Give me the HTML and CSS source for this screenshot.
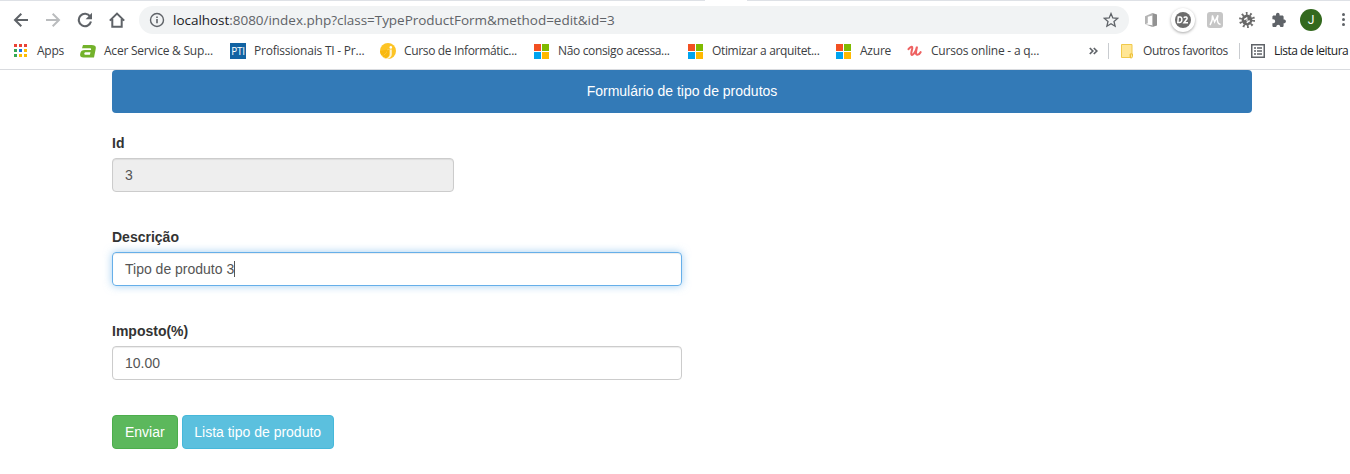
FILE: index.html
```html
<!DOCTYPE html>
<html lang="pt-BR">
<head>
<meta charset="utf-8">
<title>Formulário de tipo de produtos</title>
<link rel="stylesheet" href="styles.css">
</head>
<body>
<header class="browser">
  <div class="tab-edge"><span></span><span></span></div>
  <div class="toolbar">
    <nav class="nav-icons">
      <svg width="16" height="16" viewBox="0 0 16 16" fill="none" stroke="#5f6368" stroke-width="2"><path d="M15 8H2.2M8.3 1.7L2 8l6.3 6.3"/></svg>
      <svg width="16" height="16" viewBox="0 0 16 16" fill="none" stroke="#babcbe" stroke-width="2"><path d="M1 8h12.8M7.7 1.7L14 8l-6.3 6.3"/></svg>
      <svg width="16" height="16" viewBox="0 0 16 16"><path d="M13.2 4.6A6.2 6.2 0 1 0 14 9.6" fill="none" stroke="#5f6368" stroke-width="2.1"/><path d="M15 .8v6.4H8.6z" fill="#5f6368"/></svg>
      <svg width="16" height="16" viewBox="0 0 16 16" fill="none" stroke="#5f6368" stroke-width="2"><path d="M.8 8.6L8 1.6l7.2 7M3.3 7v7.8h9.4V7"/></svg>
    </nav>
    <div class="address">
      <svg class="info" width="16" height="16" viewBox="0 0 16 16"><circle cx="8" cy="8" r="6.5" fill="none" stroke="#5f6368" stroke-width="1.4"/><path d="M7.2 7h1.6v4.3H7.2zM7.2 4.4h1.6V6H7.2z" fill="#5f6368"/></svg>
      <span class="url"><b>localhost</b>:8080/index.php?class=TypeProductForm&amp;method=edit&amp;id=3</span>
      <svg class="star" width="16" height="16" viewBox="0 0 16 16" fill="none" stroke="#5f6368" stroke-width="1.3"><path d="M8 1.6l1.8 4.4 4.8.4-3.6 3.1 1.1 4.7L8 11.7l-4.1 2.5L5 9.5 1.4 6.4l4.8-.4z"/></svg>
    </div>
    <div class="extensions">
      <svg width="16" height="16" viewBox="0 0 16 16"><path d="M2 4.2L9.4 1v2.4L4.8 4.8v6.4L2 12.3z" fill="#b4b4b4"/><path d="M9.4 1L14 2.4v11.2L9.4 15z" fill="#929292"/><path d="M2 12.3l7.4.9V15z" fill="#a5a5a5"/></svg>
      <span class="round"><svg width="16" height="16" viewBox="0 0 16 16"><circle cx="8" cy="8" r="8" fill="#6d6d6d"/><path d="M3.3 5h1.8c2.6 0 2.2 5.6-.4 5.6H2.8zM8.8 5.8c1-1.4 4-1.2 3.2 1L9 10.8h4" fill="none" stroke="#fff" stroke-width="1.5"/></svg></span>
      <svg width="16" height="16" viewBox="0 0 16 16"><rect width="16" height="16" rx="3" fill="#c6c6c6"/><path d="M3 13C5 10 5.6 6 5.4 3.4L7.6 10l3.4-6.8c-1 3.8-1.2 9 2.6 9.2" fill="none" stroke="#fff" stroke-width="1.4"/></svg>
      <svg width="16" height="16" viewBox="0 0 16 16"><circle cx="8" cy="8" r="6.5" fill="none" stroke="#6e6e6e" stroke-width="3" stroke-dasharray="1.7 2.4"/><circle cx="8" cy="8" r="5.4" fill="#686868"/><path d="M5.2 7.7l3.2-2M7.700 10.600l3-2" stroke="#fff" stroke-width="1.500"/><circle cx="8" cy="8" r="1" fill="#ccc"/></svg>
      <svg width="16" height="16" viewBox="0 0 16 16"><path d="M13.5 7.5h-.9V4.8c0-.8-.6-1.4-1.4-1.4H8.6v-.9a1.8 1.8 0 0 0-3.6 0v.9H2.8c-.8 0-1.4.6-1.4 1.4v2.400h.8a2 2 0 0 1 0 4h-.8v2.500c0 .8.6 1.400 1.400 1.400h2.500v-.8a2 2 0 0 1 3.900 0v.8h2c.8 0 1.400-.6 1.400-1.400v-2.500h.9a1.900 1.900 0 0 0 0-3.700z" fill="#5f6368"/></svg>
      <span class="avatar">J</span>
      <span class="dots"><i></i><i></i><i></i></span>
    </div>
  </div>
  <nav class="bookmarks">
    <a class="mark apps"><svg width="14" height="14" viewBox="0 0 14 14"><path d="M0 0h3v3H0zM5 0h3v3H5zM10 0h3v3h-3z" fill="#ea4335"/><path d="M0 5h3v3H0zM0 10h3v3H0z" fill="#34a853"/><path d="M5 5h3v3H5z" fill="#1a73e8"/><path d="M10 5h3v3h-3zM5 10h3v3H5zM10 10h3v3h-3z" fill="#fbbc05"/></svg><span>Apps</span></a>
    <a class="mark"><svg width="16" height="16" viewBox="0 0 16 16"><path d="M3 2h8.500c3.600 0 4.800 1.200 4.200 4L14 14.500H3.500C.6 14.500-.2 13 .2 10.700.7 7.800 2.200 6.900 5 6.900h6c.3-1.300 0-1.700-1.200-1.700H2zM10.500 9.300H6.400c-1.500 0-2 .4-2.100 1.200-.1.900.4 1.300 1.400 1.300h4.200z" fill="#73b22b" fill-rule="evenodd"/></svg><span>Acer Service &amp; Sup...</span></a>
    <a class="mark"><span class="pti">PTI</span><span>Profissionais TI - Pr...</span></a>
    <a class="mark tight"><svg width="16" height="16" viewBox="0 0 16 16"><circle cx="8" cy="8" r="8" fill="#fdc425"/><path d="M1 12c3 .5 5.700-2 6.300-5.500h2.300V11c0 2.700-1.400 4.100-4.200 4.500A8 8 0 0 1 1 12z" fill="#fff"/><path d="M0 8a8 8 0 0 0 1.600 4.500C4.500 12.500 6.800 10 7.300 6.500z" fill="#f9b80e"/><circle cx="10.800" cy="4.400" r="1.300" fill="#fff"/><path d="M9.600 6.500h2.200V11c0 2.500-1.500 4.200-4.300 4.900L5 15.400c3-.4 4.600-1.800 4.600-4.400z" fill="#fff3cd"/><path d="M7.300 6.500h2.300V11c0 2.300-1.300 3.600-3.800 4.300A8 8 0 0 1 1.600 12.500C4.500 12.400 6.800 10 7.300 6.500z" fill="#f9b80e"/></svg><span>Curso de Informátic...</span></a>
    <a class="mark tight"><span class="ms"><i></i><i></i><i></i><i></i></span><span>Não consigo acessa...</span></a>
    <a class="mark tight"><span class="ms"><i></i><i></i><i></i><i></i></span><span>Otimizar a arquitet...</span></a>
    <a class="mark"><span class="ms"><i></i><i></i><i></i><i></i></span><span>Azure</span></a>
    <a class="mark"><svg width="16" height="16" viewBox="0 0 16 16"><path d="M1.500 6.200C3 4.300 4.600 3.400 5.200 4.200c.8 1.300-2.200 6.600-.5 7.600 1.800.8 4.400-4 5.300-8.200-.8 3.800-2 8.200.4 8.200 1.500 0 2.500-1.300 3.200-2.600" fill="none" stroke="#ee6262" stroke-width="2.100" stroke-linecap="round"/></svg><span>Cursos online - a q...</span></a>
    <span class="more"><svg width="9" height="8" viewBox="0 0 9 8" fill="none" stroke="#5f6368" stroke-width="1.700"><path d="M.8 1l3 3-3 3M4.800 1l3 3-3 3"/></svg></span>
    <a class="mark side"><svg width="13" height="15" viewBox="0 0 13 15"><path d="M.5.500h10.500v9.500h-2v3.500H.5z" fill="#ffe695" stroke="#f0c94b"/><path d="M9.500 10h2v2.500c0 1-.7 1.500-2 1.500z" fill="#ffe695" stroke="#edc23c"/></svg><span>Outros favoritos</span></a>
    <a class="mark side reading"><svg width="14" height="14" viewBox="0 0 14 14"><path d="M.75.750h12.500v12.500H.75z" fill="none" stroke="#5f6368" stroke-width="1.500"/><path d="M3 4h2M6 4h5M3 7h2M6 7h5M3 10h2M6 10h5" stroke="#5f6368" stroke-width="1.300"/></svg><span>Lista de leitura</span></a>
  </nav>
</header>
<main class="container">
  <h1 class="heading">Formulário de tipo de produtos</h1>
  <form>
    <div class="group short"><label>Id</label><div class="control disabled">3</div></div>
    <div class="group"><label>Descrição</label><div class="control focused">Tipo de produto 3<span class="caret"></span></div></div>
    <div class="group"><label>Imposto(%)</label><div class="control">10.00</div></div>
    <div class="actions"><button type="button" class="btn send">Enviar</button><button type="button" class="btn list">Lista tipo de produto</button></div>
  </form>
</main>
</body>
</html>
```
FILE: styles.css
```css
* { box-sizing: border-box; }
body { margin: 0; background: #fff; overflow: hidden; font: 14px/20px "Liberation Sans", Arial, sans-serif; color: #333; }
svg { display: block; flex: none; }
.browser { height: 70px; border-bottom: 1px solid #d9dbdf; font-family: "Open Sans", "Noto Sans", sans-serif; }
.tab-edge { display: flex; justify-content: space-between; height: 1px; }
.tab-edge span:first-child { width: 705px; background: #dee1e6; }
.tab-edge span:last-child { width: 603px; background: #dee1e6; }
.toolbar { display: flex; align-items: center; height: 37px; }
.nav-icons { display: flex; gap: 16px; padding-left: 13px; width: 139px; }
.address { display: flex; align-items: center; width: 990px; height: 28px; border-radius: 14px; background: #f1f3f4; padding: 0 10px; }
.url { flex: 1; margin-left: 8px; font-size: 13.5px; line-height: 20px; letter-spacing: -0.03px; color: #5f6368; white-space: nowrap; }
.url b { font-weight: 400; color: #202124; }
.extensions { display: flex; align-items: center; gap: 16px; padding-left: 14px; }
.round { display: flex; align-items: center; justify-content: center; width: 24px; height: 24px; margin: 0 -4px; border-radius: 50%; background: #fff; box-shadow: 0 1px 3px rgba(0,0,0,.35); }
.avatar { width: 22px; height: 22px; margin: 0 -3px; border-radius: 50%; background: #33691e; color: #fff; font: 12px/22px Roboto, sans-serif; text-align: center; }
.dots { display: flex; flex-direction: column; gap: 2px; margin-left: 7px; }
.dots i { width: 3px; height: 3px; border-radius: 50%; background: #5f6368; }
.bookmarks { display: grid; grid-template-columns: 66px 150px 150px 154px 154px 148px 71px 182px 19px 131px 111px; align-items: center; height: 26px; padding-left: 14px; font-size: 12px; line-height: 16px; letter-spacing: -0.22px; color: #3c4043; white-space: nowrap; }
.mark { display: flex; align-items: center; gap: 8px; }
.apps { gap: 9px; }
.tight { letter-spacing: -0.34px; }
.pti { width: 16px; height: 16px; background: #1263a3; color: #fff; font: 10px/16px "Open Sans", sans-serif; text-align: center; letter-spacing: -0.3px; }
.ms { display: grid; grid-template-columns: 7px 7px; grid-auto-rows: 7px; gap: 1px; width: 16px; }
.ms i:nth-child(1) { background: #f25022; }
.ms i:nth-child(2) { background: #7fba00; }
.ms i:nth-child(3) { background: #00a4ef; }
.ms i:nth-child(4) { background: #ffb900; }
.side { height: 16px; padding-left: 12px; border-left: 1px solid #c9ccd0; gap: 9px; letter-spacing: -0.38px; }
.reading { padding-left: 11px; color: #202124; letter-spacing: -0.5px; }
.container { width: 1140px; margin-left: 112px; }
.heading { margin: 0 0 20px; height: 43px; border-radius: 4px; background: #337ab7; color: #fff; font-size: 14px; font-weight: 400; line-height: 42px; text-align: center; }
.group { width: 570px; margin-bottom: 35px; }
.short { width: 342px; }
.group label { display: block; margin-bottom: 5px; font-weight: 700; }
.control { display: flex; align-items: center; height: 34px; padding: 0 12px; border: 1px solid #ccc; border-radius: 4px; color: #555; box-shadow: inset 0 1px 1px rgba(0,0,0,.075); }
.disabled { background: #eee; }
.focused { border-color: #66afe9; box-shadow: inset 0 1px 1px rgba(0,0,0,.075), 0 0 8px rgba(102,175,233,.6); }
.caret { width: 1px; height: 16px; background: #555; }
.actions { display: flex; gap: 4px; }
.btn { height: 34px; padding: 0 12px; border: 1px solid; border-radius: 4px; color: #fff; font: 14px/20px "Liberation Sans", Arial, sans-serif; white-space: nowrap; }
.send { background: #5cb85c; border-color: #4cae4c; }
.list { width: 152px; padding: 0 11px; background: #5bc0de; border-color: #46b8da; }
```
